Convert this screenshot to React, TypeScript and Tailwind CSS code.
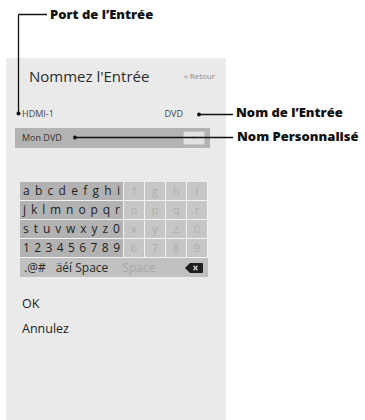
import React from "react";

const leftRows = ["abcdefghi", "jklmnopqr", "stuvwxyz0", "123456789"];
const rightRows = [
  ["f", "g", "h", "i"],
  ["o", "p", "q", "r"],
  ["x", "y", "z", "0"],
  ["6", "7", "8", "9"],
];

export default function App() {
  return (
    <div
      className="relative w-[365px] h-[420px] bg-white overflow-hidden"
      style={{ fontFamily: '"Open Sans", "Noto Sans", sans-serif' }}
    >
      {/* panel */}
      <div className="ml-[6px] mt-[58px] w-[220px] h-[362px] bg-[#eaeaea] flex flex-col text-[#222]">
        <div className="pt-[8px] pl-[23px] pr-[11px] h-[28px] flex justify-between items-center">
          <span className="text-[15px] leading-[20px] text-[#2a2a2a]">Nommez l'Entrée</span>
          <span className="text-[8px] leading-[10px] text-[#8a8a8a]">« Retour</span>
        </div>
        <div className="mt-[22px] pl-[16px] pr-[43px] h-[12px] flex justify-between items-center text-[9px] leading-[12px] text-[#444]">
          <span>HDMI-1</span>
          <span>DVD</span>
        </div>
        <div className="mt-[8px] ml-[9px] mr-[16px] h-[20px] bg-[#b3b3b3] flex items-center justify-between pl-[7px] pr-[5px]">
          <span className="text-[9px] leading-[12px] text-[#333]">Mon DVD</span>
          <div className="w-[22px] h-[14px] bg-[#e2e2e2] border border-[#c4c4c4] flex items-center justify-center">
            <span className="text-[7px] leading-[8px] text-[#bbb]">×</span>
          </div>
        </div>
        <div className="mt-[34px] ml-[14px] w-[188px] flex flex-col gap-[1px] bg-[#f3f3f3]">
          {leftRows.map((row, i) => (
            <div key={i} className="flex h-[18px] gap-[1px]">
              <div className="relative w-[103px] bg-[#b2b2b2] flex items-center justify-between px-[3px] text-[12px] leading-[14px] text-[#1f1f1f]">
                {row.split("").map((c, j) => (
                  <span key={j}>{c}</span>
                ))}
              </div>
              {rightRows[i].map((c, j) => (
                <div
                  key={j}
                  className="w-[20px] bg-[#c6c6c6] flex items-center justify-center text-[11px] leading-[12px] text-[#adadad]"
                >
                  {c}
                </div>
              ))}
            </div>
          ))}
          <div className="flex h-[19px] bg-[#c0c0c0] items-center text-[12px] leading-[14px]">
            <span className="ml-[4px] text-[#2a2a2a]">.@#</span>
            <span className="ml-[10px] text-[#2a2a2a]">äéí Space</span>
            <span className="ml-[14px] text-[#a9a9a9]">Space</span>
            <div className="ml-auto mr-[5px] w-[18px] h-[10px] flex items-center">
              <svg width="18" height="10" viewBox="0 0 18 10">
                <path d="M5 0 H17 a1 1 0 0 1 1 1 V9 a1 1 0 0 1 -1 1 H5 L0 5 Z" fill="#1e1e1e" />
                <path d="M8.5 2.8 L12.5 7.2 M12.5 2.8 L8.5 7.2" stroke="#d0d0d0" strokeWidth="1.3" />
              </svg>
            </div>
          </div>
        </div>
        <div className="mt-[19px] pl-[16px] text-[12.5px] leading-[16px] text-[#222]">OK</div>
        <div className="mt-[9px] pl-[16px] text-[12.5px] leading-[16px] text-[#222]">Annulez</div>
      </div>

      {/* callout lines */}
      <svg className="absolute left-0 top-0" width="365" height="420" viewBox="0 0 365 420">
        <path d="M18.5 14.5 H47 M18.5 14.5 V113" stroke="#111" strokeWidth="1.3" fill="none" />
        <circle cx="18.5" cy="113.5" r="2" fill="#111" />
        <path d="M199 114.5 H233" stroke="#111" strokeWidth="1.3" />
        <circle cx="199" cy="114.5" r="2" fill="#111" />
        <path d="M75 137.5 H233" stroke="#111" strokeWidth="1.6" />
        <circle cx="75" cy="137.5" r="2" fill="#111" />
      </svg>
      <span className="absolute left-[50px] top-[6px] text-[13px] leading-[17px] font-extrabold text-[#111]">Port de l’Entrée</span>
      <span className="absolute left-[236px] top-[104px] text-[13px] leading-[17px] font-extrabold text-[#111]">Nom de l’Entrée</span>
      <span className="absolute left-[237px] top-[128px] text-[13px] leading-[17px] font-extrabold text-[#111]">Nom Personnalisé</span>
    </div>
  );
}
